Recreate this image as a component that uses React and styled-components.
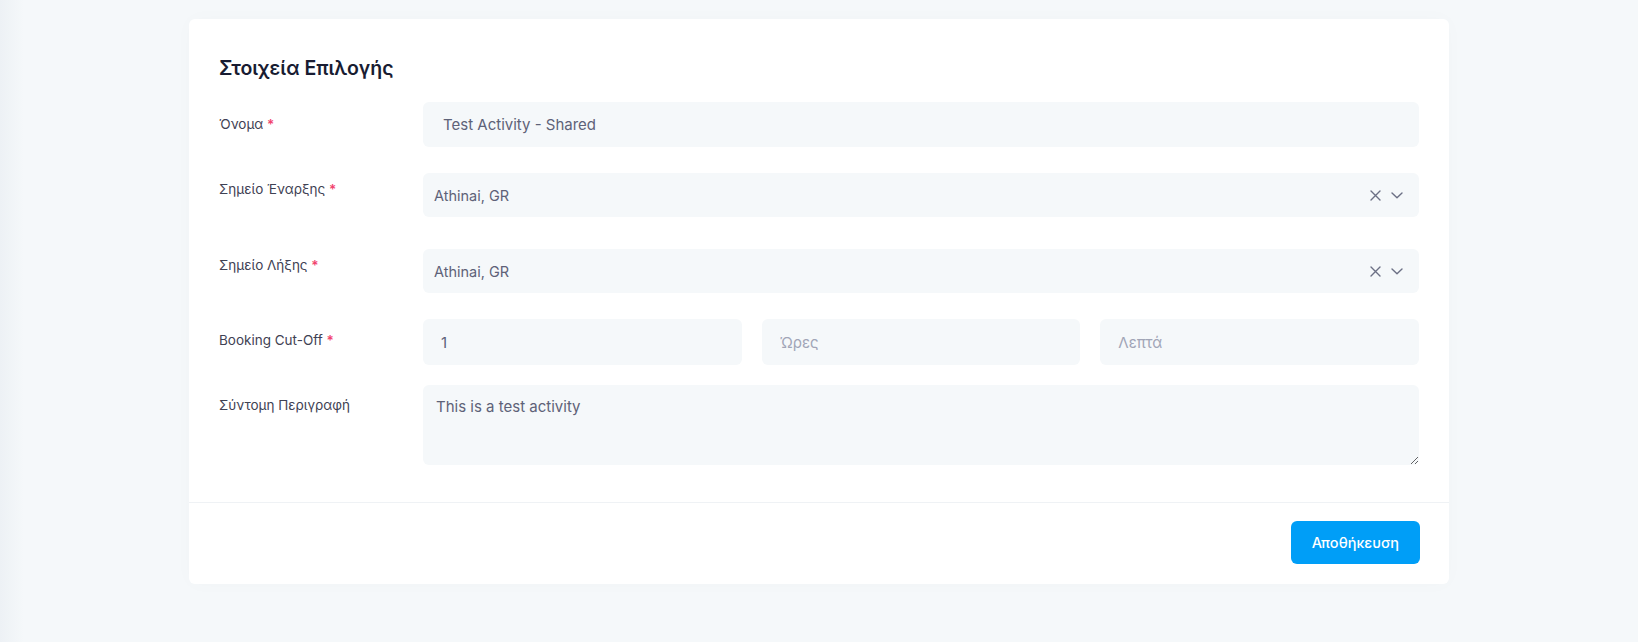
import styled, { createGlobalStyle } from "styled-components";

const GlobalStyle = createGlobalStyle`
    html, body {
        margin: 0;
        padding: 0;
    }
    body {
        min-height: 642px;
        background: linear-gradient(to right, #edf1f5 0, #f5f8fa 24px, #f5f8fa 100%);
        font-family: Inter, "Noto Sans", sans-serif;
        color: #3f4254;
    }
`;

const ClearIcon = () => (
    <svg width="11" height="11" viewBox="0 0 11 11" fill="none">
        <path d="M1 1L10 10M10 1L1 10" stroke="#6c7085" strokeWidth="1.4" strokeLinecap="round" />
    </svg>
);

const ChevronIcon = () => (
    <svg width="12" height="7" viewBox="0 0 12 7" fill="none">
        <path d="M1 1L6 5.8L11 1" stroke="#6c7085" strokeWidth="1.4" strokeLinecap="round" strokeLinejoin="round" />
    </svg>
);

const App = () => {
    return (
        <Page>
            <GlobalStyle />
            <Card>
                <CardBody>
                    <Title>Στοιχεία Επιλογής</Title>

                    <Row $mb={26}>
                        <Label $pt={12}>Όνομα <Req>*</Req></Label>
                        <Field>
                            <TextInput type="text" defaultValue="Test Activity - Shared" />
                        </Field>
                    </Row>

                    <Row $mb={32}>
                        <Label $pt={6}>Σημείο Έναρξης <Req>*</Req></Label>
                        <Field>
                            <Select>
                                <SelectValue>Athinai, GR</SelectValue>
                                <SelectIcons>
                                    <ClearIcon />
                                    <ChevronIcon />
                                </SelectIcons>
                            </Select>
                        </Field>
                    </Row>

                    <Row $mb={26}>
                        <Label $pt={6}>Σημείο Λήξης <Req>*</Req></Label>
                        <Field>
                            <Select>
                                <SelectValue>Athinai, GR</SelectValue>
                                <SelectIcons>
                                    <ClearIcon />
                                    <ChevronIcon />
                                </SelectIcons>
                            </Select>
                        </Field>
                    </Row>

                    <Row $mb={20}>
                        <Label $pt={11}>Booking Cut-Off <Req>*</Req></Label>
                        <TripleField>
                            <SmallInput type="text" defaultValue="1" />
                            <SmallInput type="text" placeholder="Ώρες" />
                            <SmallInput type="text" placeholder="Λεπτά" />
                        </TripleField>
                    </Row>

                    <Row $mb={0}>
                        <Label $pt={10}>Σύντομη Περιγραφή</Label>
                        <Field>
                            <TextArea defaultValue="This is a test activity" />
                        </Field>
                    </Row>
                </CardBody>
                <CardFooter>
                    <SaveButton>Αποθήκευση</SaveButton>
                </CardFooter>
            </Card>
        </Page>
    );
};

const Page = styled.div`
    max-width: 1260px;
    margin: 0 auto;
    padding-top: 19px;
`;

const Card = styled.div`
    background: #ffffff;
    border-radius: 6px;
    box-shadow: 0 0 20px rgba(76, 87, 125, 0.02);
`;

const CardBody = styled.div`
    padding: 36px 30px 37px 30px;
`;

const Title = styled.h3`
    margin: 0 0 20px 0;
    font-size: 19.5px;
    font-weight: 600;
    color: #181c32;
    line-height: 27px;
`;

const Row = styled.div`
    display: flex;
    align-items: flex-start;
    margin-bottom: ${(p) => p.$mb}px;
`;

const Label = styled.div`
    width: 204px;
    flex-shrink: 0;
    padding-top: ${(p) => p.$pt}px;
    font-size: 13.5px;
    font-weight: 400;
    color: #3f4254;
    line-height: 20px;
`;

const Req = styled.span`
    color: #f1416c;
    font-weight: 600;
`;

const Field = styled.div`
    flex: 1;
`;

const TextInput = styled.input`
    display: block;
    width: 100%;
    box-sizing: border-box;
    height: 45px;
    padding: 0 20px;
    border: none;
    outline: none;
    border-radius: 6px;
    background: #f5f8fa;
    font-family: inherit;
    font-size: 15px;
    font-weight: 400;
    color: #5e6278;
`;

const Select = styled.div`
    display: flex;
    align-items: center;
    justify-content: space-between;
    height: 44px;
    padding: 0 16px 0 11px;
    border-radius: 6px;
    background: #f5f8fa;
`;

const SelectValue = styled.span`
    font-size: 14.5px;
    font-weight: 400;
    color: #5e6278;
`;

const SelectIcons = styled.div`
    display: flex;
    align-items: center;
    gap: 10px;
`;

const TripleField = styled.div`
    flex: 1;
    display: grid;
    grid-template-columns: repeat(3, 1fr);
    gap: 20px;
`;

const SmallInput = styled(TextInput)`
    height: 46px;
    padding: 0 18px;
    &::placeholder {
        color: #a1a5b7;
    }
`;

const TextArea = styled.textarea`
    display: block;
    width: 100%;
    box-sizing: border-box;
    height: 80px;
    padding: 11px 13px;
    border: none;
    outline: none;
    border-radius: 6px;
    background: #f5f8fa;
    font-family: inherit;
    font-size: 15px;
    font-weight: 400;
    color: #5e6278;
    line-height: 21px;
`;

const CardFooter = styled.div`
    display: flex;
    justify-content: flex-end;
    padding: 18px 29px 20px 30px;
    border-top: 1px solid #eff2f5;
`;

const SaveButton = styled.button`
    height: 43px;
    padding: 0 21px;
    border: none;
    border-radius: 6px;
    background: #009ef7;
    color: #ffffff;
    font-family: inherit;
    font-size: 14.5px;
    font-weight: 500;
    cursor: pointer;
`;

export default App;
